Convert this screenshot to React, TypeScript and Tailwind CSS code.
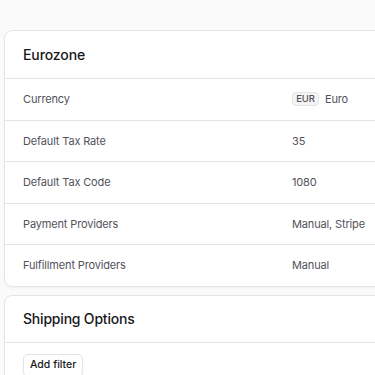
import React from "react";

const rows = [
	{ label: "Currency", value: "Euro", badge: "EUR" },
	{ label: "Default Tax Rate", value: "35" },
	{ label: "Default Tax Code", value: "1080" },
	{ label: "Payment Providers", value: "Manual, Stripe" },
	{ label: "Fulfillment Providers", value: "Manual" },
];

const App = () => {
	return (
		<div
			className="h-[375px] w-[375px] overflow-hidden bg-[#fafafa] pl-1 pt-[30px]"
			style={{ fontFamily: "Inter, 'Noto Sans', sans-serif" }}
		>
			<div className="flex w-[600px] flex-col gap-2">
				{/* Region details */}
				<div className="rounded-lg border border-[#e4e4e7] bg-white shadow-[0_1px_2px_rgba(0,0,0,0.04)]">
					<div className="flex h-[47px] items-center px-[18px]">
						<h2 className="text-[14px] font-medium tracking-[-0.1px] text-[#18181b]">Eurozone</h2>
					</div>
					{rows.map((row) => (
						<div
							key={row.label}
							className="grid h-[41.5px] grid-cols-[269px_1fr] items-center border-t border-[#e4e4e7] px-[18px] text-[11px] tracking-[-0.15px] text-[#52525b]"
						>
							<span>{row.label}</span>
							<div className="flex items-center gap-[6px]">
								{row.badge && (
									<span className="flex h-[14px] w-[27px] items-center justify-center rounded-[4px] border border-[#e4e4e7] bg-[#f4f4f5] text-[9.5px] font-medium text-[#52525b]">
										{row.badge}
									</span>
								)}
								<span>{row.value}</span>
							</div>
						</div>
					))}
				</div>

				{/* Shipping options */}
				<div className="rounded-lg border border-[#e4e4e7] bg-white shadow-[0_1px_2px_rgba(0,0,0,0.04)]">
					<div className="flex h-[46px] items-center px-[18px]">
						<h2 className="text-[14px] font-medium tracking-[-0.2px] text-[#18181b]">Shipping Options</h2>
					</div>
					<div className="border-t border-[#e4e4e7] px-[18px] pb-4 pt-[11px]">
						<button className="flex h-[23px] items-center rounded-[5px] border border-[#e4e4e7] bg-white px-[6px] text-[10.5px] font-medium text-[#18181b] shadow-[0_1px_2px_rgba(0,0,0,0.06)]">
							Add filter
						</button>
					</div>
				</div>
			</div>
		</div>
	);
};

export default App;
